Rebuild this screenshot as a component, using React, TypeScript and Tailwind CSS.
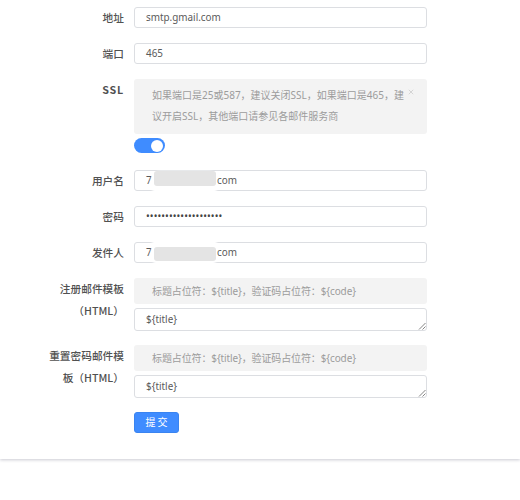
const cjk = "[font-family:'Noto_Sans','Noto_Sans_CJK_SC',sans-serif]";

function Label({ children }: { children: React.ReactNode }) {
  return (
    <div className="w-[84px] shrink-0 pl-[5px] text-right text-[10.7px] leading-[22px] font-medium text-[#515151] [font-family:'Noto_Sans_CJK_SC','Noto_Sans',sans-serif]">
      {children}
    </div>
  );
}

function Input({ children }: { children: React.ReactNode }) {
  return (
    <div className="relative h-[21.5px] rounded-[3px] border border-[#dcdee2] bg-white pl-[11px] text-[9.9px] leading-[19.5px] text-[#5a5a5a] [font-family:'Noto_Sans','Noto_Sans_CJK_SC',sans-serif]">
      {children}
    </div>
  );
}

function Smudge({ blobTop, blobH, top, h }: { blobTop: string; blobH: string; top: string; h: string }) {
  return (
    <>
      <div className={`absolute left-[17px] w-[65px] rounded-[8px] bg-white blur-[1px] ${blobTop} ${blobH}`} />
      <div className={`absolute left-[19px] w-[62px] rounded-[3px] bg-[#e4e4e4] blur-[0.6px] ${top} ${h}`} />
    </>
  );
}

function Hint() {
  return (
    <div className="h-[26px] rounded-[3px] bg-[#f3f3f3] pl-[18px] text-[10px] leading-[26px] tracking-[-0.12px] text-[#9c9c9c] [font-family:'Noto_Sans','Noto_Sans_CJK_SC',sans-serif]">
      标题占位符：{"${title}"}，验证码占位符：{"${code}"}
    </div>
  );
}

function TextArea({ h, mt }: { h: string; mt: string }) {
  return (
    <div className={`relative ${mt} ${h} rounded-[3px] border border-[#dcdee2] bg-white pl-[11px] text-[9.9px] leading-[20px] text-[#5a5a5a] [font-family:'Noto_Sans','Noto_Sans_CJK_SC',sans-serif]`}>
      {"${title}"}
      <svg viewBox="0 0 8 8" className="absolute right-0 bottom-0 h-[8px] w-[8px]">
        <path d="M1 7.5 7.5 1M4.5 7.5 7.5 4.5" stroke="#666" strokeWidth="0.8" fill="none" />
      </svg>
    </div>
  );
}

function Row({ label, children }: { label: React.ReactNode; children: React.ReactNode }) {
  return (
    <div className="flex gap-[10px]">
      <Label>{label}</Label>
      <div className="w-[292.5px]">{children}</div>
    </div>
  );
}

export default function App() {
  return (
    <div className={`h-[500px] w-[520px] overflow-hidden bg-white ${cjk}`}>
      <div className="h-[458.5px] bg-white pt-[6.5px] pl-[40px] shadow-[0_1px_3px_rgba(80,80,110,0.3)]">
        <div className="flex flex-col gap-[14px]">
          <Row label="地址"><Input>smtp.gmail.com</Input></Row>
          <Row label="端口"><Input>465</Input></Row>
          <Row label={<span className="font-bold tracking-[0.8px]">SSL</span>}>
            <div className="relative h-[55px] rounded-[3px] bg-[#f3f3f3] pt-[6px] pr-[15px] pl-[18px] text-[10px] leading-[21.5px] text-[#9c9c9c] [font-family:'Noto_Sans','Noto_Sans_CJK_SC',sans-serif]">
              如果端口是25或587，建议关闭SSL，如果端口是465，建议开启SSL，其他端口请参见各邮件服务商
              <svg viewBox="0 0 8 8" className="absolute top-[10.5px] right-[13px] h-[6px] w-[6px]">
                <path d="M1 1 7 7M7 1 1 7" stroke="#c5c5c5" strokeWidth="0.9" fill="none" />
              </svg>
            </div>
            <div className="relative mt-[4.5px] mb-[2.5px] h-[15px] w-[31px] rounded-full bg-[#3f8cff]">
              <div className="absolute top-[1.5px] right-[2px] h-[12px] w-[12px] rounded-full bg-white" />
            </div>
          </Row>
          <Row label="用户名">
            <Input>
              7
              <Smudge blobTop="top-0" blobH="h-[25px]" top="top-0" h="h-[15px]" />
              <span className="absolute left-[82px]">com</span>
            </Input>
          </Row>
          <Row label="密码">
            <Input><span className="tracking-[0.1px] text-[#444]">••••••••••••••••••••</span></Input>
          </Row>
          <Row label="发件人">
            <Input>
              7
              <Smudge blobTop="top-[-7px]" blobH="h-[30px]" top="top-[4px]" h="h-[14px]" />
              <span className="absolute left-[82px]">com</span>
            </Input>
          </Row>
          <Row label="注册邮件模板（HTML）">
            <Hint />
            <TextArea mt="mt-[4.5px]" h="h-[22.5px]" />
          </Row>
          <Row label="重置密码邮件模板（HTML）">
            <Hint />
            <TextArea mt="mt-[4px]" h="h-[23px]" />
          </Row>
          <Row label="">
            <div className="flex h-[21.5px] w-[45px] items-center justify-center rounded-[3px] border border-[#3a84f0] bg-[#3f8cff] pl-[2px] text-[10px] tracking-[2px] text-white">
              提交
            </div>
          </Row>
        </div>
      </div>
    </div>
  );
}
